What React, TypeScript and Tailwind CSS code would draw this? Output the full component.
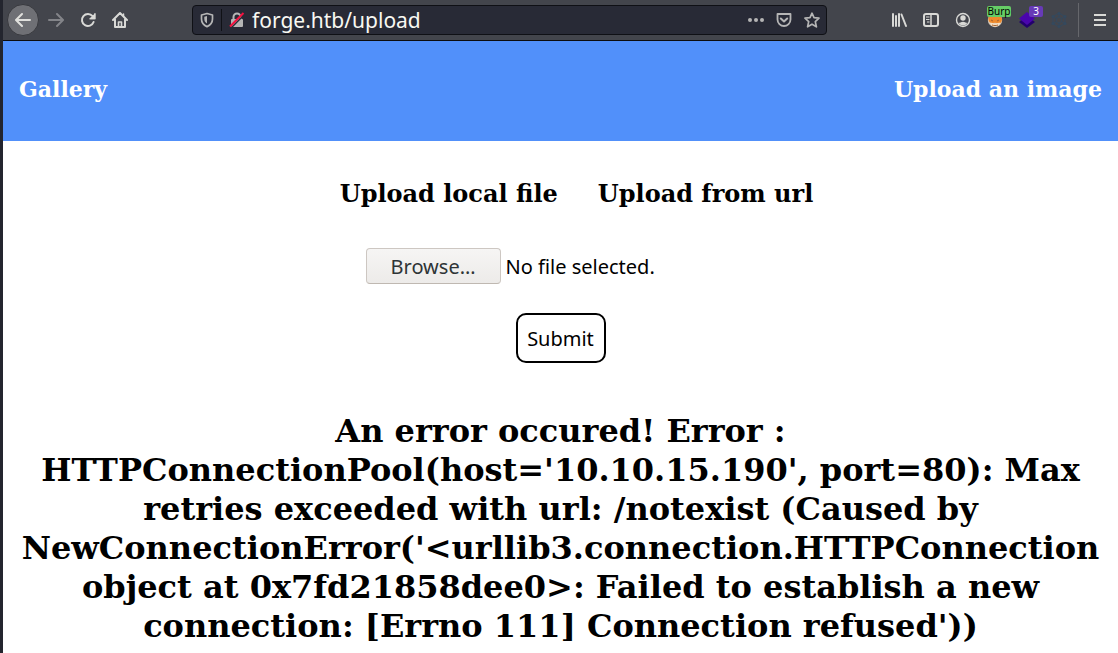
import React, { useState } from "react";

const iconButton = "flex h-8 w-8 shrink-0 items-center justify-center text-[#d9d9d6]";

function Toolbar() {
  const [address, setAddress] = useState("forge.htb/upload");
  return (
    <header className="flex h-[41px] items-center border-b border-[#0c0c0d] bg-[#43454c] pl-1 pr-[2px] font-['Noto_Sans',sans-serif]">
      <button aria-label="Back" className="flex h-8 w-8 shrink-0 items-center justify-center rounded-full border border-[#38393e] bg-[#6f7075] text-[#e0e0dd]">
        <svg width="16" height="16" viewBox="0 0 16 16" fill="none" stroke="currentColor" strokeWidth="2" strokeLinecap="round" strokeLinejoin="round">
          <path d="M15 8H1.500M7 2L1 8l6 6" />
        </svg>
      </button>
      <button aria-label="Forward" className="ml-px flex h-8 w-8 shrink-0 items-center justify-center text-[#838489]">
        <svg width="16" height="16" viewBox="0 0 16 16" fill="none" stroke="currentColor" strokeWidth="2" strokeLinecap="round" strokeLinejoin="round">
          <path d="M1 8h13.500M9 2l6 6-6 6" />
        </svg>
      </button>
      <button aria-label="Reload" className={iconButton}>
        <svg width="16" height="16" viewBox="0 0 16 16" fill="none" stroke="currentColor" strokeWidth="2" strokeLinecap="round">
          <path d="M13.600 10A6 6 0 1 1 12.600 4.200" />
          <path d="M15 1.200v6H9z" fill="currentColor" stroke="none" />
          <path d="M15 1.800v4.700h-4.700" strokeWidth="1.400" />
        </svg>
      </button>
      <button aria-label="Home" className={iconButton}>
        <svg width="16" height="16" viewBox="0 0 16 16" fill="none" stroke="currentColor" strokeWidth="2" strokeLinecap="round" strokeLinejoin="round">
          <path d="M1 8l7-7 7 7M3 7.500V15h10V7.500" />
          <path d="M6.500 14.500V10h3v4.500" strokeWidth="1.600" />
          <path d="M11.500 2v2" strokeWidth="1.500" />
        </svg>
      </button>
      <div className="ml-14 mr-14 flex h-[30px] min-w-0 flex-1 items-center rounded border border-[#0f1015] bg-[#282a36] text-[#b5b5b5]">
        <button aria-label="Tracking protection" className="flex h-7 w-7 shrink-0 items-center justify-center">
          <svg width="14" height="16" viewBox="0 0 14 16" fill="none" stroke="currentColor" strokeWidth="1.700">
            <path d="M7 1.500L12.500 3v4c0 3.500-1.800 6-5.500 7.600C3.300 13 1.500 10.500 1.500 7V3z" strokeLinejoin="round" />
            <path d="M7 4v7.500C5 10.200 4.300 8.700 4.300 7V4.700z" fill="currentColor" stroke="none" />
          </svg>
        </button>
        <span className="h-[22px] w-px bg-[#101116]" />
        <button aria-label="Connection is not secure" className="flex h-7 w-[30px] shrink-0 items-center justify-center">
          <svg width="16" height="16" viewBox="0 0 16 16" fill="none">
            <path d="M4.500 8V5a3.500 3.500 0 0 1 7 0v3" stroke="currentColor" strokeWidth="2" />
            <rect x="2" y="7" width="12" height="8" rx="1" fill="currentColor" />
            <path d="M2.500 15.500L15.500 2.500" stroke="#282a36" strokeWidth="1.500" />
            <path d="M1 14.500L14.500 1" stroke="#f5113f" strokeWidth="2" />
          </svg>
        </button>
        <input
          aria-label="Address"
          value={address}
          onChange={(e) => setAddress(e.target.value)}
          className="h-7 min-w-0 flex-1 bg-transparent text-[21px] leading-7 text-[#f8f8f2] outline-none"
        />
        <button aria-label="Page actions" className="flex h-7 w-7 shrink-0 items-center justify-center">
          <svg width="16" height="16" viewBox="0 0 16 16" fill="currentColor">
            <circle cx="2" cy="8" r="2" /><circle cx="8" cy="8" r="2" /><circle cx="14" cy="8" r="2" />
          </svg>
        </button>
        <button aria-label="Save to Pocket" className="flex h-7 w-7 shrink-0 items-center justify-center">
          <svg width="16" height="16" viewBox="0 0 16 16" fill="none" stroke="currentColor" strokeWidth="1.800" strokeLinecap="round" strokeLinejoin="round">
            <path d="M1.500 2h13v5.500a6.500 6.500 0 0 1-13 0z" />
            <path d="M4.800 6.500L8 9.500l3.200-3" strokeWidth="2" />
          </svg>
        </button>
        <button aria-label="Bookmark this page" className="flex h-7 w-7 shrink-0 items-center justify-center">
          <svg width="16" height="16" viewBox="0 0 16 16" fill="none" stroke="currentColor" strokeWidth="1.700" strokeLinejoin="round">
            <path d="M8 1.200l2 4.500 5 .5-3.700 3.400L12.400 14.800 8 12.200l-4.400 2.600L4.700 9.600 1 6.200l5-.5z" />
          </svg>
        </button>
      </div>
      <button aria-label="Library" className={iconButton}>
        <svg width="16" height="16" viewBox="0 0 16 16" fill="none" stroke="currentColor" strokeWidth="2" strokeLinecap="round">
          <path d="M2 2v12M5 4v10M8 2v12M10.500 2.500L15 14" />
        </svg>
      </button>
      <button aria-label="Sidebars" className={iconButton}>
        <svg width="16" height="16" viewBox="0 0 16 16" fill="none" stroke="currentColor" strokeWidth="2">
          <rect x="1" y="2" width="14" height="12" rx="2" />
          <path d="M8 2v12" strokeWidth="1.500" />
          <path d="M3 5h3.500M3 7.500h3.500M4 10h2.500" strokeWidth="1.200" />
        </svg>
      </button>
      <button aria-label="Account" className={iconButton}>
        <svg width="16" height="16" viewBox="0 0 16 16" fill="currentColor">
          <circle cx="8" cy="8" r="6.500" fill="none" stroke="currentColor" strokeWidth="1.400" />
          <circle cx="8" cy="6" r="2.700" />
          <path d="M3.500 10.500c1 1 2.500-.8 4.500-.8s3.500 1.800 4.500.8c-.8 2-2.500 3-4.500 3s-3.700-1-4.500-3z" />
        </svg>
      </button>
      <button aria-label="FoxyProxy" className={iconButton + " relative"}>
        <svg width="16" height="16" viewBox="0 0 16 16">
          <circle cx="8" cy="8" r="7.200" fill="#d9c8b4" />
          <path d="M1.500 6L3 2l4 2h3l3-2 2 5c0 3-1.500 4.500-4 4.500-2-1-4-1-6 0-2-.5-4-2.500-3.500-5.500z" fill="#ef8a2c" />
          <path d="M3 11c2-1 3.500.6 5 .6s3.500-1.600 5.500-.6c-1 2.500-3 3.500-5.500 3.500S4 13.500 3 11z" fill="#f6dfc3" />
          <path d="M4 8l2 1M12 8l-2 1M5 13c2 .8 4 .8 6 0" stroke="#a5622f" strokeWidth="1" fill="none" />
        </svg>
        <span className="absolute left-2 top-[2px] flex h-[11px] w-6 items-center justify-center rounded-xs bg-[#66cc66] text-[10px] leading-[11px] text-black">Burp</span>
      </button>
      <button aria-label="Extension with 3 items" className={iconButton + " relative"}>
        <svg width="18" height="18" viewBox="0 0 18 18">
          <path d="M9 5l8 6-8 6-8-6z" fill="#23006e" />
          <path d="M9 1l8 6.500L9 14 1 7.500z" fill="#4a05ad" />
        </svg>
        <span className="absolute left-[18px] top-[2px] flex h-[11px] w-[14px] items-center justify-center rounded-xs bg-[#673ab7] text-[10px] leading-[11px] text-white">3</span>
      </button>
      <button aria-label="Extension" className="flex h-8 w-8 shrink-0 items-center justify-center text-[#34495e]">
        <svg width="16" height="16" viewBox="0 0 16 16" fill="none" stroke="currentColor">
          <path d="M8 1l6 3.500v7L8 15l-6-3.500v-7zM8 1v4M2 4.500l3.500 2M14 4.500l-3.500 2M2 11.500l3.500-2M14 11.500l-3.500-2M8 15v-4M8 5l2.600 1.500v3L8 11 5.400 9.500v-3z" />
          <g fill="currentColor" stroke="none">
            <circle cx="8" cy="1.500" r="1.500" /><circle cx="14" cy="4.500" r="1.500" /><circle cx="14" cy="11.500" r="1.500" /><circle cx="8" cy="14.500" r="1.500" /><circle cx="2" cy="11.500" r="1.500" /><circle cx="2" cy="4.500" r="1.500" />
          </g>
        </svg>
      </button>
      <span className="ml-[3px] mr-[5px] h-[34px] w-px bg-[#66676c]" />
      <button aria-label="Open menu" className={iconButton}>
        <svg width="14" height="14" viewBox="0 0 14 14" fill="none" stroke="currentColor" strokeWidth="2" strokeLinecap="square">
          <path d="M2 2h10M2 7h10M2 12h10" />
        </svg>
      </button>
    </header>
  );
}

export default function App() {
  const [fileName, setFileName] = useState("No file selected.");
  return (
    <div className="min-h-screen border-l-3 border-[#23252e] bg-white font-['DejaVu_Serif',serif] text-black">
      <Toolbar />
      <nav className="flex h-[100px] justify-between bg-[#5190fa] px-4 pt-[34px] text-[22px] font-bold leading-7 text-white">
        <a href="#gallery">Gallery</a>
        <a href="#upload">Upload an image</a>
      </nav>
      <main className="flex flex-col items-center px-4 pt-9">
        <div className="flex gap-10 pl-8 pt-px text-2xl font-bold leading-8">
          <button>Upload local file</button>
          <button>Upload from url</button>
        </div>
        <form className="mt-[38px] flex w-full flex-col items-center font-['Noto_Sans',sans-serif] text-xl" onSubmit={(e) => e.preventDefault()}>
          <div className="flex w-[390px] items-center gap-[5px]">
            <label htmlFor="file" className="flex h-9 w-[135px] shrink-0 cursor-pointer items-center justify-center rounded border border-[#cdc7c2] border-b-[#bfb8b1] bg-linear-to-b from-[#f6f5f4] to-[#edebe9] pt-px text-[#2e3436]">
              Browse…
            </label>
            <input id="file" type="file" className="sr-only" onChange={(e) => setFileName(e.target.files?.[0]?.name ?? "No file selected.")} />
            <span className="whitespace-nowrap pt-px">{fileName}</span>
          </div>
          <button type="submit" className="mt-[29px] h-[50px] w-[90px] rounded-[10px] border-2 border-black bg-white pt-px">Submit</button>
        </form>
        <h1 className="mt-[49px] text-center text-[32px] font-bold leading-[39px]">
          An error occured! Error : HTTPConnectionPool(host='10.10.15.190', port=80): Max retries exceeded with url: /notexist (Caused by NewConnectionError('&lt;urllib3.connection.HTTPConnection object at 0x7fd21858dee0&gt;: Failed to establish a new connection: [Errno 111] Connection refused'))
        </h1>
      </main>
    </div>
  );
}
